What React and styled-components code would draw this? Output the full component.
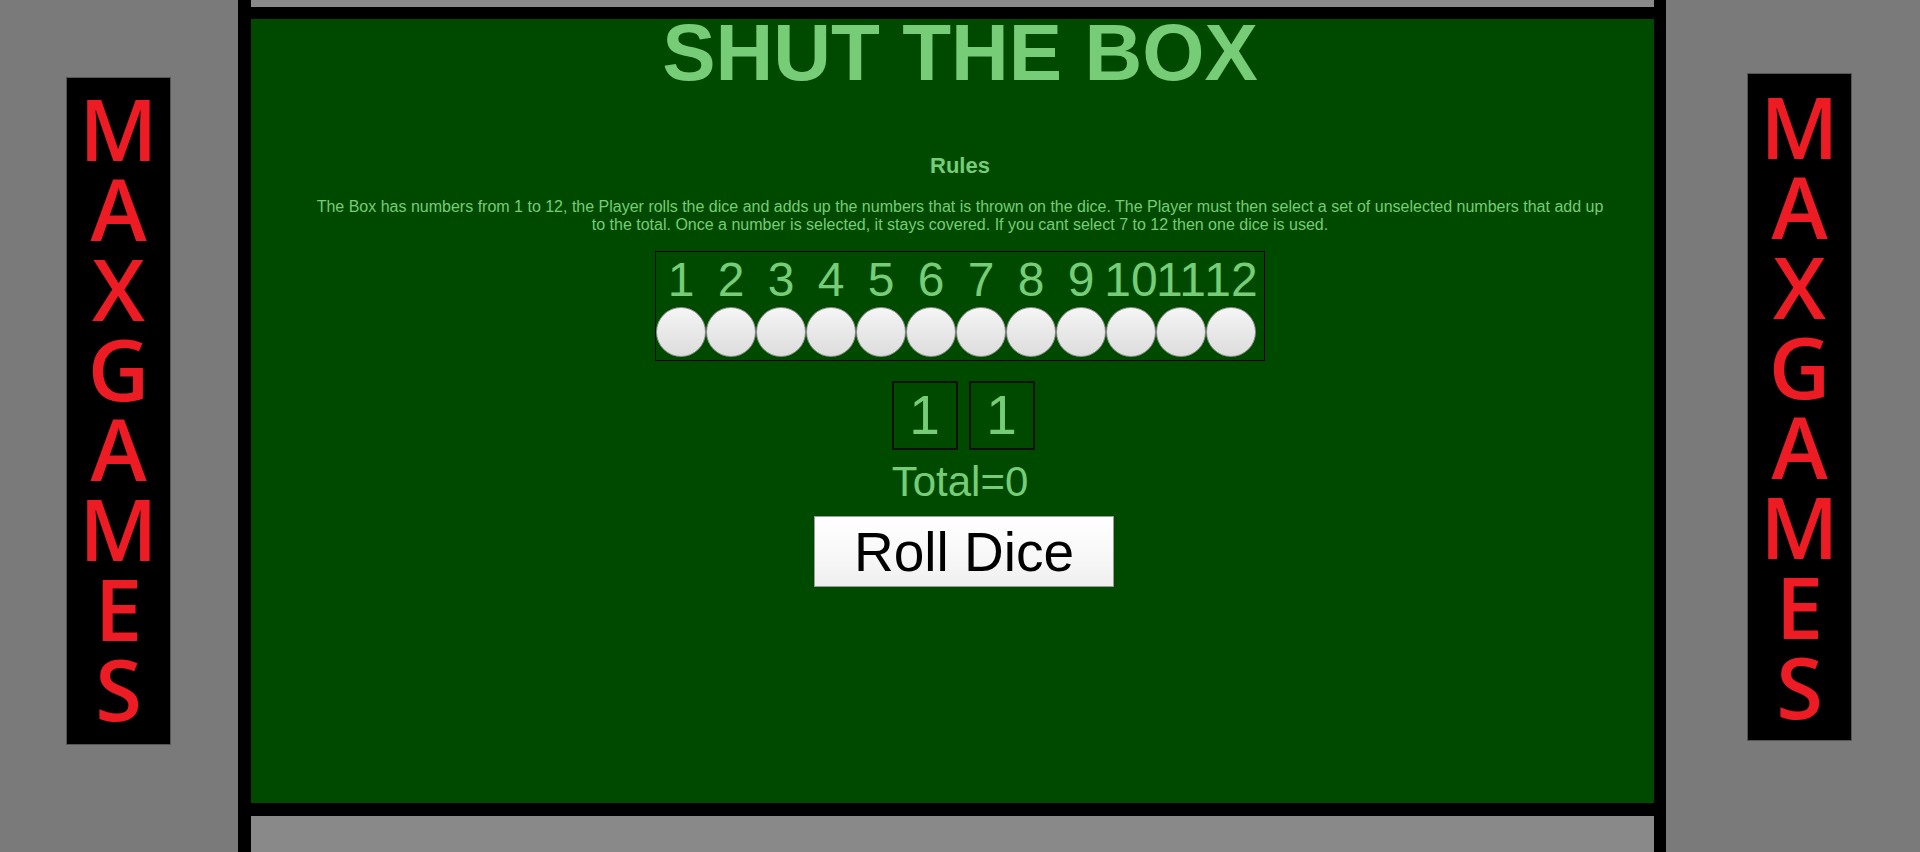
import React from 'react'
import styled, { createGlobalStyle } from 'styled-components'

const GlobalStyle = createGlobalStyle`
  html, body {
    margin: 0;
    padding: 0;
    height: 852px;
    overflow: hidden;
    background: #7a7a7a;
    font-family: "Liberation Sans", Arial, sans-serif;
  }
`

const Page = styled.div`
  display: grid;
  grid-template-columns: 238px 1428px 1fr;
  height: 852px;
`

const Side = styled.div`
  display: flex;
  align-items: flex-start;
  padding-top: ${(p) => p.$top}px;
  padding-left: ${(p) => p.$left}px;
`

// the sign is one word, broken one letter per line
const Banner = styled.div`
  width: 105px;
  height: 668px;
  box-sizing: border-box;
  background: #000;
  border: 1px solid #555;
  padding: ${(p) => p.$pad}px 6px 0;
  font-family: "Open Sans", "Noto Sans", sans-serif;
  font-size: 85px;
  font-weight: 600;
  line-height: 80px;
  color: #ed1c24;
  text-align: center;
  word-break: break-all;
`

const Frame = styled.div`
  background: #000;
  display: flex;
  flex-direction: column;
  padding: 0 12px 0 13px;
`

const Strip = styled.div`
  background: #898989;
  height: ${(p) => (p.$grow ? 'auto' : '7px')};
  flex: ${(p) => (p.$grow ? 1 : 'none')};
`

const Board = styled.div`
  background: #004a00;
  height: 784px;
  margin: 12px 0 13px;
  padding-left: 15px;
  display: flex;
  flex-direction: column;
  align-items: center;
  color: #77cc77;
`

const Title = styled.h1`
  margin: -6px 0 0;
  font-size: 80px;
  line-height: 80px;
  font-weight: 700;
`

const RulesHeading = styled.h3`
  margin: 60px 0 0;
  font-size: 22px;
  line-height: 26px;
  font-weight: 700;
`

const RulesText = styled.p`
  margin: 19px 0 0;
  width: 1300px;
  font-size: 16px;
  line-height: 18px;
  text-align: center;
`

const NumberBox = styled.div`
  margin-top: 17px;
  width: 610px;
  height: 110px;
  box-sizing: border-box;
  border: 1px solid #000;
  display: flex;
  flex-direction: column;
`

const Row = styled.div`
  display: flex;
`

const NumberCell = styled.span`
  width: 50px;
  display: flex;
  justify-content: center;
  font-size: 48px;
  line-height: 55px;
  white-space: nowrap;
`

const Peg = styled.span`
  width: 48px;
  height: 48px;
  border: 1px solid #8e8e8e;
  border-radius: 50%;
  background: linear-gradient(to bottom, #f6f6f6 0%, #ececec 35%, #dddddd 100%);
`

const DiceRow = styled.div`
  margin-top: 20px;
  padding-left: 6px;
  display: flex;
  gap: 11px;
`

const Die = styled.div`
  width: 66px;
  height: 69px;
  box-sizing: border-box;
  border: 2px solid #111;
  display: flex;
  align-items: center;
  justify-content: center;
  font-size: 55px;
  line-height: 1;
`

const Total = styled.div`
  margin-top: 9px;
  font-size: 42px;
  line-height: 46px;
`

const RollButton = styled.button`
  margin: 11px 0 0 8px;
  width: 300px;
  height: 71px;
  border: 1px solid #9a9a9a;
  background: linear-gradient(to bottom, #ffffff 0%, #f7f7f7 60%, #efefef 100%);
  font-family: "Liberation Sans", Arial, sans-serif;
  font-size: 55px;
  color: #000;
  padding: 0;
  cursor: pointer;
`

const numbers = [1, 2, 3, 4, 5, 6, 7, 8, 9, 10, 11, 12]

const SideBanner = ({ top, left, pad }) => (
  <Side $top={top} $left={left}>
    <Banner $pad={pad}>MAXGAMES</Banner>
  </Side>
)

export default function App() {
  return (
    <>
      <GlobalStyle />
      <Page>
        <SideBanner top={77} left={66} pad={10} />
        <Frame>
          <Strip />
          <Board>
            <Title>SHUT THE BOX</Title>
            <RulesHeading>Rules</RulesHeading>
            <RulesText>
              The Box has numbers from 1 to 12, the Player rolls the dice and adds up the numbers that
              is thrown on the dice. The Player must then select a set of unselected numbers that add
              up to the total. Once a number is selected, it stays covered. If you cant select 7 to 12
              then one dice is used.
            </RulesText>
            <NumberBox>
              <Row>
                {numbers.map((n) => (
                  <NumberCell key={n}>{n}</NumberCell>
                ))}
              </Row>
              <Row>
                {numbers.map((n) => (
                  <Peg key={n} />
                ))}
              </Row>
            </NumberBox>
            <DiceRow>
              <Die>1</Die>
              <Die>1</Die>
            </DiceRow>
            <Total>Total=0</Total>
            <RollButton>Roll Dice</RollButton>
          </Board>
          <Strip $grow />
        </Frame>
        <SideBanner top={73} left={81} pad={12} />
      </Page>
    </>
  )
}
